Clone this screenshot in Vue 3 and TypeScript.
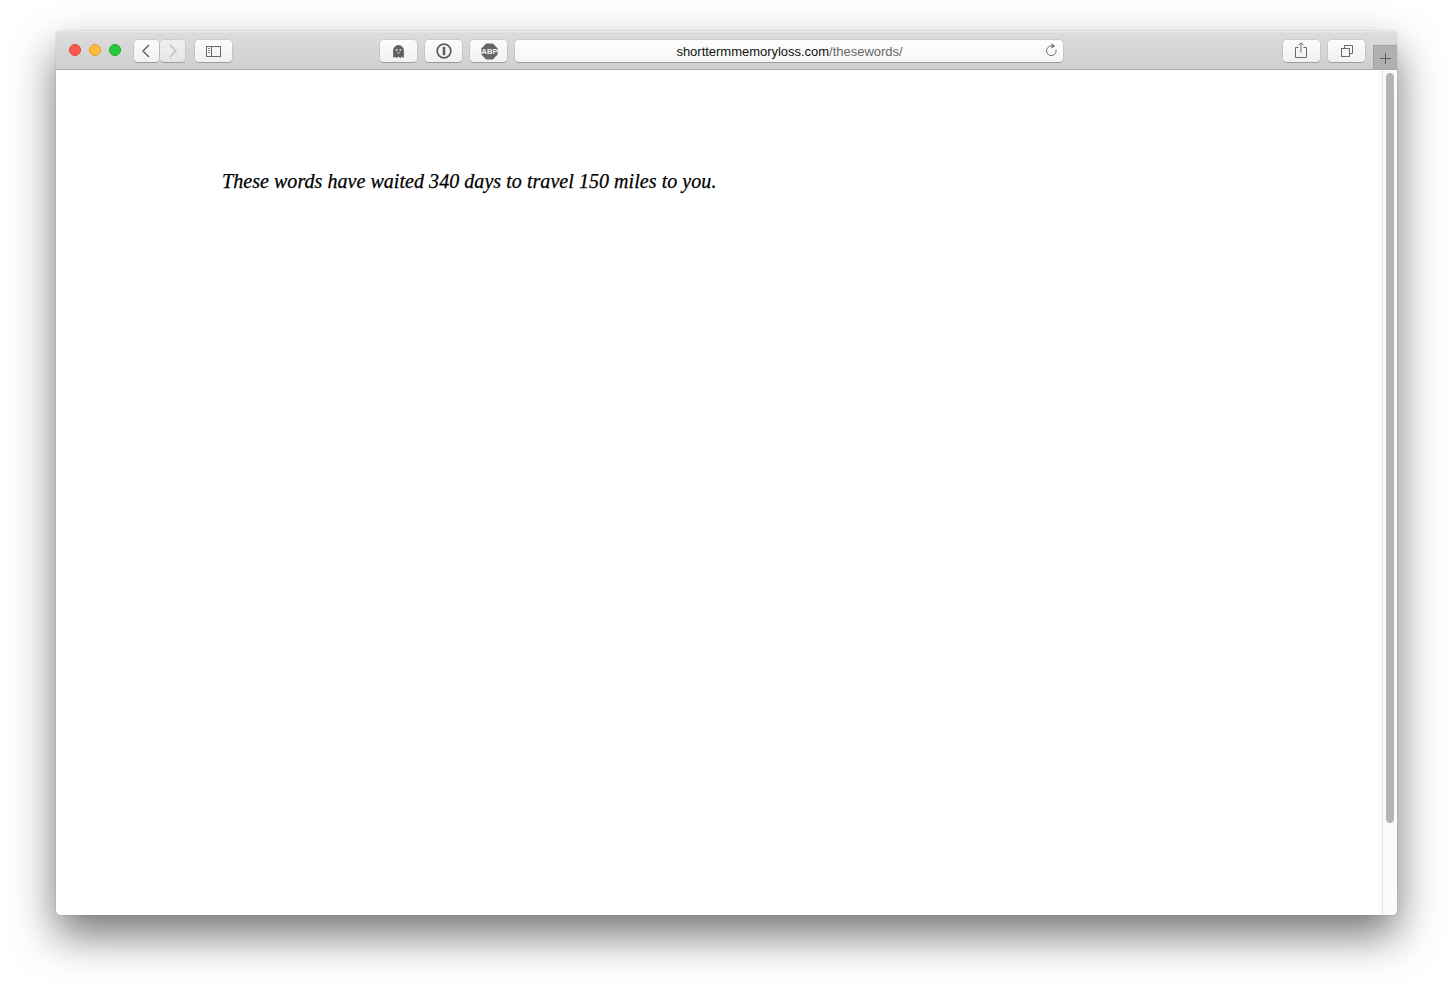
<script setup lang="ts">
const host: string = 'shorttermmemoryloss.com'
const path: string = '/thesewords/'
</script>

<template>
  <div class="stage">
    <div class="window">
      <header class="toolbar">
        <div class="lights">
          <span class="light red"></span>
          <span class="light yellow"></span>
          <span class="light green"></span>
        </div>
        <div class="nav">
          <button class="btn nav-btn">
            <svg width="10" height="14" viewBox="0 0 10 14"><path d="M8 1 2 7l6 6" fill="none" stroke="#6a6a6a" stroke-width="1.5"/></svg>
          </button>
          <button class="btn nav-btn">
            <svg width="10" height="14" viewBox="0 0 10 14"><path d="M2 1l6 6-6 6" fill="none" stroke="#c0c0c0" stroke-width="1.5"/></svg>
          </button>
        </div>
        <button class="btn wide sidebar">
          <svg width="15" height="11" viewBox="0 0 15 11">
            <rect x=".5" y=".5" width="14" height="10" fill="none" stroke="#6a6a6a"/>
            <path d="M5.5 0v11" stroke="#6a6a6a"/>
            <path d="M2 2.5h2M2 4.5h2M2 6.5h2" stroke="#8a8a8a"/>
          </svg>
        </button>
        <div class="extensions">
          <button class="btn wide">
            <svg width="13" height="15" viewBox="0 0 12 14">
              <path d="M1 13V6a5 5 0 0 1 10 0v7l-1.700-1.200L7.700 13 6 11.800 4.300 13 2.700 11.800Z" fill="#5f5f5f"/>
              <circle cx="4.300" cy="5.500" r=".9" fill="#e8e8e8"/>
              <circle cx="7.700" cy="5.500" r=".9" fill="#e8e8e8"/>
              <path d="M4.500 8q1.500 1 3 0" fill="none" stroke="#e8e8e8" stroke-width=".7"/>
            </svg>
          </button>
          <button class="btn wide">
            <svg width="16" height="16" viewBox="0 0 16 16">
              <circle cx="8" cy="8" r="6.800" fill="none" stroke="#5f5f5f" stroke-width="1.800"/>
              <rect x="6.700" y="3.800" width="2.600" height="8.400" rx=".8" fill="#5f5f5f"/>
            </svg>
          </button>
          <button class="btn wide">
            <svg class="abp-icon" width="17" height="17" viewBox="0 0 17 17">
              <path d="M5.200 .5h6.600l4.700 4.700v6.600l-4.700 4.700H5.200L.5 11.800V5.200Z" fill="#666"/>
              <text x="8.500" y="11.200" text-anchor="middle" class="abp">ABP</text>
            </svg>
          </button>
        </div>
        <div class="address">
          <span class="url"><span class="host">{{ host }}</span><span class="path">{{ path }}</span></span>
          <svg class="reload" width="13" height="14" viewBox="0 0 13 14">
            <path d="M11 6.700A4.800 4.800 0 1 1 6.200 3" fill="none" stroke="#6f6f6f" stroke-width="1"/>
            <path d="M6.500 .4 10.200 3 6.500 5.600Z" fill="#6f6f6f"/>
          </svg>
        </div>
        <div class="right">
          <button class="btn wide">
            <svg class="share" width="12" height="16" viewBox="0 0 12 16">
              <path d="M3.500 5.500H.5v10h11v-10h-3" fill="none" stroke="#6a6a6a"/>
              <path d="M6 10.500V1M3.500 3.300 6 .8l2.500 2.500" fill="none" stroke="#6a6a6a"/>
            </svg>
          </button>
          <button class="btn wide">
            <svg width="12" height="12" viewBox="0 0 12 12">
              <rect x=".5" y="3.500" width="8" height="8" fill="none" stroke="#6a6a6a"/>
              <path d="M3.500 3.500v-3h8v8h-3" fill="none" stroke="#6a6a6a"/>
            </svg>
          </button>
        </div>
        <div class="new-tab">
          <svg width="11" height="11" viewBox="0 0 11 11"><path d="M5.500 0v11M0 5.500h11" stroke="#5e5e5e"/></svg>
        </div>
      </header>
      <div class="body">
        <main class="page">
          <p class="line">These words have waited 340 days to travel 150 miles to you.</p>
        </main>
        <div class="track"><div class="thumb"></div></div>
      </div>
    </div>
  </div>
</template>

<style>
html, body { margin: 0; background: #fff; }
</style>

<style scoped>
.stage {
  box-sizing: border-box;
  width: 1453px;
  height: 995px;
  padding: 31px 56px 80px;
  overflow: hidden;
  background: #fff;
}
.window {
  display: flex;
  flex-direction: column;
  height: 100%;
  border-radius: 5px;
  box-shadow: 0 20px 44px rgba(0, 0, 0, .55), 0 0 1px rgba(0, 0, 0, .5);
}
.toolbar {
  box-sizing: border-box;
  flex: none;
  display: flex;
  align-items: flex-start;
  height: 39px;
  padding: 9px 0 0 13px;
  background: linear-gradient(#ececec, #dcdcdc 6%, #cfcfcf);
  border-bottom: 1px solid #a8a8a8;
  border-radius: 5px 5px 0 0;
}
.lights {
  display: flex;
  gap: 8px;
  margin: 4px 13px 0 0;
}
.light {
  box-sizing: border-box;
  width: 12px;
  height: 12px;
  border-radius: 50%;
  border: 1px solid;
}
.red { background: #fc5753; border-color: #e0443e; }
.yellow { background: #fdbc40; border-color: #dea123; }
.green { background: #29c93f; border-color: #1aab29; }
.btn {
  display: flex;
  align-items: center;
  justify-content: center;
  box-sizing: border-box;
  height: 22px;
  padding: 0;
  background: linear-gradient(#fcfcfc, #f1f1f1);
  border: 0;
  border-radius: 4px;
  box-shadow: 0 0 0 .5px rgba(0, 0, 0, .14), 0 1px 0 rgba(0, 0, 0, .2);
}
.nav { display: flex; gap: 1px; }
.nav-btn { width: 25px; }
.nav-btn svg { margin-left: -2px; }
.nav-btn + .nav-btn { background: linear-gradient(#f0f0f0, #e6e6e6); }
.nav-btn + .nav-btn svg { margin-left: 0; }
.wide { width: 37px; }
.sidebar { margin-left: 10px; }
.extensions {
  display: flex;
  gap: 8px;
  margin-left: 148px;
}
.abp-icon { margin-left: 1px; }
.abp {
  font: 700 7.500px "Liberation Sans", sans-serif;
  fill: #f2f2f2;
}
.share { margin: -3px 1px 0 0; }
.address {
  position: relative;
  display: flex;
  align-items: center;
  justify-content: center;
  width: 548px;
  height: 22px;
  margin-left: 8px;
  background: linear-gradient(#fdfdfd, #f6f6f6);
  border-radius: 4px;
  box-shadow: 0 0 0 .5px rgba(0, 0, 0, .14), 0 1px 0 rgba(0, 0, 0, .2);
}
.url {
  margin: 1px 0 0 1px;
  font: 13px/22px "Liberation Sans", Arial, sans-serif;
  letter-spacing: -.02px;
}
.host { color: #111; }
.path { color: #666; }
.reload {
  position: absolute;
  right: 5px;
  top: 3px;
}
.right {
  display: flex;
  gap: 8px;
  margin-left: 220px;
}
.new-tab {
  display: flex;
  align-items: center;
  justify-content: center;
  box-sizing: border-box;
  width: 24px;
  height: 24px;
  margin: 5px 0 0 8px;
  padding-top: 2px;
  background: #b0b0b0;
  border: 1px solid #a4a4a4;
  border-bottom: 0;
  border-right: 0;
}
.body {
  flex: 1;
  display: flex;
  min-height: 0;
  background: #fff;
  border-radius: 0 0 5px 5px;
  overflow: hidden;
}
.page { flex: 1; min-width: 0; }
.line {
  margin: 99px 0 0 166px;
  font: italic 20px/24px "Liberation Serif", Georgia, serif;
  color: #000;
  letter-spacing: .05px;
  -webkit-text-stroke: .25px #000;
}
.track {
  box-sizing: border-box;
  flex: none;
  width: 15px;
  padding: 3px 3px 0;
  background: #fbfbfb;
  border-left: 1px solid #e6e6e6;
}
.thumb {
  width: 8px;
  height: 750px;
  border-radius: 4px;
  background: #b5b5b5;
}
</style>
